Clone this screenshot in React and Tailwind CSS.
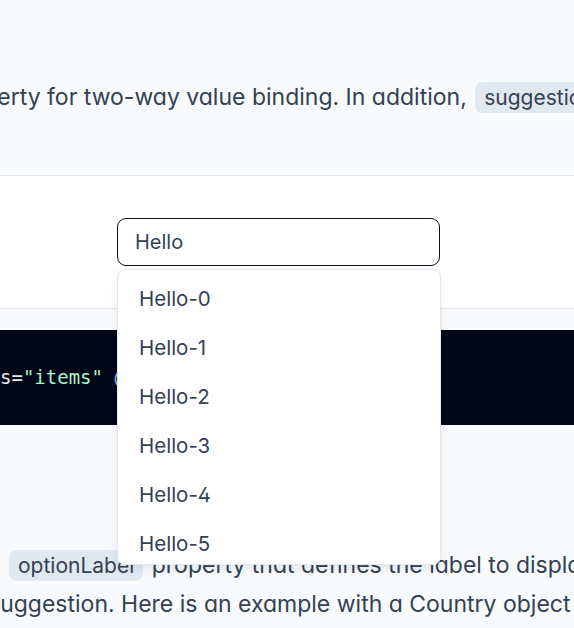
import React from "react";

const items = Array.from({ length: 10 }, (_, i) => `Hello-${i}`);

const Chip = ({ children }) => (
    <code className="mx-[2px] rounded-[8px] bg-[#e2e8f0] px-[9px] py-[3px] font-['Inter',sans-serif] text-[21px] text-[#334155]">
        {children}
    </code>
);

const App = () => {
    return (
        <div className="h-[628px] w-full overflow-hidden bg-[#f8fafc] font-['Inter',sans-serif] text-[#334155] [font-feature-settings:'cv02','cv03','cv04','cv11']">
            {/* intro text */}
            <div className="flex h-[175px] items-center pt-[19px]">
                <p className="-ml-[53px] whitespace-nowrap text-[23px] leading-[35px]">
                    property for two-way value binding. In addition, <Chip>suggestions</Chip> property and a complete method are required
                </p>
            </div>

            {/* demo */}
            <div className="border-y border-[#e2e8f0] bg-white">
                <div className="h-[132px] pl-[117px] pt-[42px]">
                    <div className="relative w-[323px]">
                        <input
                            type="text"
                            defaultValue="Hello"
                            className="h-[48px] w-full rounded-[9px] border border-[#0b0f19] bg-white px-[17px] text-[20px] text-[#334155] outline-none"
                        />
                        <div className="absolute left-0 top-[51px] z-10 h-[296px] w-[324px] overflow-hidden rounded-[8px] border border-[#e2e8f0] bg-white pt-[5px] shadow-[0_4px_10px_rgba(15,23,42,0.08)]">
                            {items.map((item) => (
                                <div key={item} className="flex h-[49px] items-center px-[21px] text-[20.5px] text-[#334155]">
                                    {item}
                                </div>
                            ))}
                        </div>
                    </div>
                </div>
            </div>

            {/* code */}
            <div className="mt-[21px] h-[95px] bg-[#020617] pt-[33px]">
                <pre className="whitespace-pre font-['DejaVu_Sans_Mono',monospace] text-[19px] leading-[28px] text-[#e2e8f0]">
                    s=<span className="text-[#a7f3c9]">"items"</span> <span className="text-[#7dd3fc]">@complete</span>=<span className="text-[#a7f3c9]">"search"</span> /&gt;
                </pre>
            </div>

            {/* objects text */}
            <div className="pt-[121px] text-[23px] leading-[39px]">
                <p className="-ml-[34px] whitespace-nowrap">
                    the <Chip>optionLabel</Chip> property that defines the label to display as a
                </p>
                <p className="-ml-[12px] whitespace-nowrap">
                    suggestion. Here is an example with a Country object that has name and code fields
                </p>
            </div>
        </div>
    );
};

export default App;
